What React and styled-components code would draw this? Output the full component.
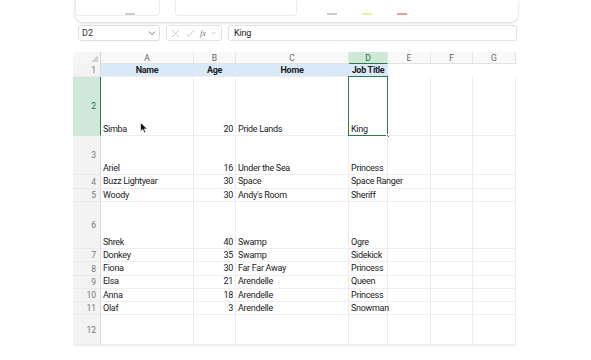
import React from 'react'
import styled, { createGlobalStyle } from 'styled-components'

const GlobalStyle = createGlobalStyle`
  html, body { margin: 0; padding: 0; background: #fff; }
  body { font-family: "Roboto", "Liberation Sans", sans-serif; color: #222; }
`

const COLS = [28, 93, 42, 113, 39, 43, 42, 43]
const LETTERS = ['A', 'B', 'C', 'D', 'E', 'F', 'G']

const ROWS = [
  { n: 1, h: 13.3, header: true, cells: ['Name', 'Age', 'Home', 'Job Title'] },
  { n: 2, h: 59, cells: ['Simba', '20', 'Pride Lands', 'King'] },
  { n: 3, h: 39, cells: ['Ariel', '16', 'Under the Sea', 'Princess'] },
  { n: 4, h: 13.5, cells: ['Buzz Lightyear', '30', 'Space', 'Space Ranger'] },
  { n: 5, h: 13.5, cells: ['Woody', '30', "Andy's Room", 'Sheriff'] },
  { n: 6, h: 47, cells: ['Shrek', '40', 'Swamp', 'Ogre'] },
  { n: 7, h: 13.2, cells: ['Donkey', '35', 'Swamp', 'Sidekick'] },
  { n: 8, h: 13.2, cells: ['Fiona', '30', 'Far Far Away', 'Princess'] },
  { n: 9, h: 13.2, cells: ['Elsa', '21', 'Arendelle', 'Queen'] },
  { n: 10, h: 13.2, cells: ['Anna', '18', 'Arendelle', 'Princess'] },
  { n: 11, h: 13.2, cells: ['Olaf', '3', 'Arendelle', 'Snowman'] },
  { n: 12, h: 30, cells: ['', '', '', ''] },
]

const Page = styled.div`
  position: relative;
  width: 591px;
  height: 360px;
  overflow: hidden;
  padding-left: 73px;
  box-sizing: border-box;
`

const Ribbon = styled.div`
  margin-left: 2px;
  width: 443px;
  height: 22px;
  box-sizing: border-box;
  border-radius: 0 0 8px 8px;
  background: #fff;
  box-shadow: 0 1px 3px rgba(0, 0, 0, 0.18);
  display: flex;
  align-items: flex-start;
`

const RibbonField = styled.div`
  margin-left: ${p => p.$ml}px;
  width: ${p => p.$w}px;
  height: 16px;
  box-sizing: border-box;
  border: 1px solid #ececec;
  border-top: none;
  border-radius: 0 0 4px 4px;
`

const Dash = styled.div`
  margin-top: 13px;
  margin-left: ${p => p.$ml}px;
  width: ${p => p.$w}px;
  height: 1.5px;
  background: ${p => p.$c};
`

const FormulaBar = styled.div`
  display: flex;
  align-items: center;
  width: 444px;
  height: 16px;
  margin-top: 3px;
  padding-left: 5px;
  box-sizing: border-box;
  gap: 6px;
`

const NameBox = styled.div`
  width: 82px;
  height: 16px;
  box-sizing: border-box;
  border: 1px solid #dedede;
  border-radius: 3px;
  display: flex;
  align-items: center;
  justify-content: space-between;
  padding: 0 3px;
  font-size: 9px;
  color: #333;
`

const FxBox = styled.div`
  width: 56px;
  height: 16px;
  box-sizing: border-box;
  border: 1px solid #e3e3e3;
  border-radius: 3px;
  display: flex;
  align-items: center;
  gap: 5px;
  padding-left: 4px;
`

const FxText = styled.span`
  font-family: "Liberation Serif", serif;
  font-style: italic;
  font-size: 8.5px;
  color: #777;
`

const FormulaInput = styled.div`
  flex: 1;
  height: 16px;
  box-sizing: border-box;
  border: 1px solid #e3e3e3;
  border-radius: 3px;
  display: flex;
  align-items: center;
  padding-left: 5px;
  font-size: 9px;
  letter-spacing: -0.2px;
  color: #222;
`

const Sheet = styled.div`
  margin-top: 11px;
  display: grid;
  grid-template-columns: ${COLS.map(c => c + 'px').join(' ')};
  width: 443px;
  background: #fff;
  box-shadow: 0 2px 2px -1px rgba(0, 0, 0, 0.08);
`

const Corner = styled.div`
  height: 12px;
  background: #f6f6f6;
  border-right: 1px solid #d6d6d6;
  box-sizing: border-box;
  position: relative;
  &::after {
    content: '';
    position: absolute;
    right: 2px;
    bottom: 2px;
    border-left: 7px solid transparent;
    border-bottom: 7px solid #d2d2d2;
  }
`

const ColHead = styled.div`
  height: 12px;
  box-sizing: border-box;
  display: flex;
  align-items: center;
  justify-content: center;
  font-size: 8.5px;
  color: ${p => (p.$active ? '#1f6e43' : '#666')};
  background: ${p => (p.$active ? '#cfe8d8' : '#f9f9f9')};
  border-right: 1px solid #e6e6e6;
  border-bottom: ${p => (p.$active ? '1.5px solid #2b7a4b' : '1px solid #e2e2e2')};
`

const RowHead = styled.div`
  height: ${p => p.$h}px;
  box-sizing: border-box;
  display: flex;
  align-items: center;
  justify-content: flex-end;
  padding-right: 4px;
  font-size: 8.5px;
  color: ${p => (p.$active ? '#1f6e43' : '#777')};
  background: ${p => (p.$active ? '#cfe8d8' : '#f3f3f3')};
  border-right: ${p => (p.$active ? '1.5px solid #2b7a4b' : '1px solid #dcdcdc')};
  border-bottom: 1px solid ${p => (p.$active ? '#cfe8d8' : '#e9e9e9')};
`

const Cell = styled.div`
  height: ${p => p.$h}px;
  box-sizing: border-box;
  display: flex;
  align-items: flex-end;
  justify-content: ${p => (p.$header ? 'center' : p.$right ? 'flex-end' : 'flex-start')};
  padding: 0 2px 0.5px 2px;
  font-size: 9px;
  letter-spacing: -0.3px;
  font-weight: ${p => (p.$header ? 700 : 400)};
  line-height: 12px;
  white-space: nowrap;
  overflow: visible;
  background: ${p => (p.$fill ? '#dae9f8' : 'transparent')};
  border-right: 1px solid ${p => (p.$fill || p.$blank ? 'transparent' : '#ececec')};
  border-bottom: 1px solid ${p => (p.$blank ? 'transparent' : '#eeeeee')};
  position: relative;
`

const Selection = styled.div`
  position: absolute;
  inset: -1px;
  border: 1.5px solid #2b7a4b;
  pointer-events: none;
  &::after {
    content: '';
    position: absolute;
    right: -3px;
    bottom: -3px;
    width: 4px;
    height: 4px;
    background: #2b7a4b;
    border: 1px solid #fff;
    box-sizing: border-box;
  }
`

const Pointer = styled.svg`
  position: absolute;
  left: 140px;
  top: 122px;
`

function Chevron() {
  return (
    <svg width="8" height="6" viewBox="0 0 8 6">
      <path d="M1 1.5 L4 4.5 L7 1.5" fill="none" stroke="#777" strokeWidth="1" />
    </svg>
  )
}

function Cross() {
  return (
    <svg width="9" height="9" viewBox="0 0 9 9">
      <path d="M1 1 L8 8 M8 1 L1 8" stroke="#c4c4c4" strokeWidth="0.9" />
    </svg>
  )
}

function Check() {
  return (
    <svg width="10" height="9" viewBox="0 0 10 9">
      <path d="M1 4.5 L3.8 7.5 L9 1" fill="none" stroke="#c4c4c4" strokeWidth="0.9" />
    </svg>
  )
}

export default function App() {
  return (
    <Page>
      <GlobalStyle />
      <Ribbon>
        <RibbonField $ml={0} $w={85} />
        <Dash $ml={-35} $w={10} $c="#cccccc" />
        <RibbonField $ml={40} $w={122} />
        <Dash $ml={30} $w={10} $c="#cccccc" />
        <Dash $ml={25} $w={10} $c="#f2ef9a" />
        <Dash $ml={25} $w={10} $c="#eaa0a0" />
      </Ribbon>

      <FormulaBar>
        <NameBox>
          <span>D2</span>
          <Chevron />
        </NameBox>
        <FxBox>
          <Cross />
          <Check />
          <FxText>fx</FxText>
          <svg width="5" height="4" viewBox="0 0 5 4">
            <path d="M0.5 1 L2.5 3 L4.5 1" fill="none" stroke="#bbb" strokeWidth="0.8" />
          </svg>
        </FxBox>
        <FormulaInput>King</FormulaInput>
      </FormulaBar>

      <Sheet>
        <Corner />
        {LETTERS.map(l => (
          <ColHead key={l} $active={l === 'D'}>{l}</ColHead>
        ))}
        {ROWS.map(row => (
          <React.Fragment key={row.n}>
            <RowHead $h={row.h} $active={row.n === 2}>{row.n}</RowHead>
            {row.cells.map((text, i) => (
              <Cell
                key={i}
                $h={row.h}
                $header={row.header}
                $fill={row.header}
                $right={i === 1 && !row.header}
              >
                {text}
                {row.n === 2 && i === 3 && <Selection />}
              </Cell>
            ))}
            {[0, 1, 2].map(i => (
              <Cell key={'e' + i} $h={row.h} $blank={row.header} />
            ))}
          </React.Fragment>
        ))}
      </Sheet>

      <Pointer width="8" height="12" viewBox="0 0 8 12">
        <path d="M0.5 0.5 L0.5 9.5 L2.8 7.4 L4.4 11 L5.8 10.4 L4.3 6.9 L7.3 6.9 Z" fill="#111" stroke="#fff" strokeWidth="0.7" />
      </Pointer>
    </Page>
  )
}
